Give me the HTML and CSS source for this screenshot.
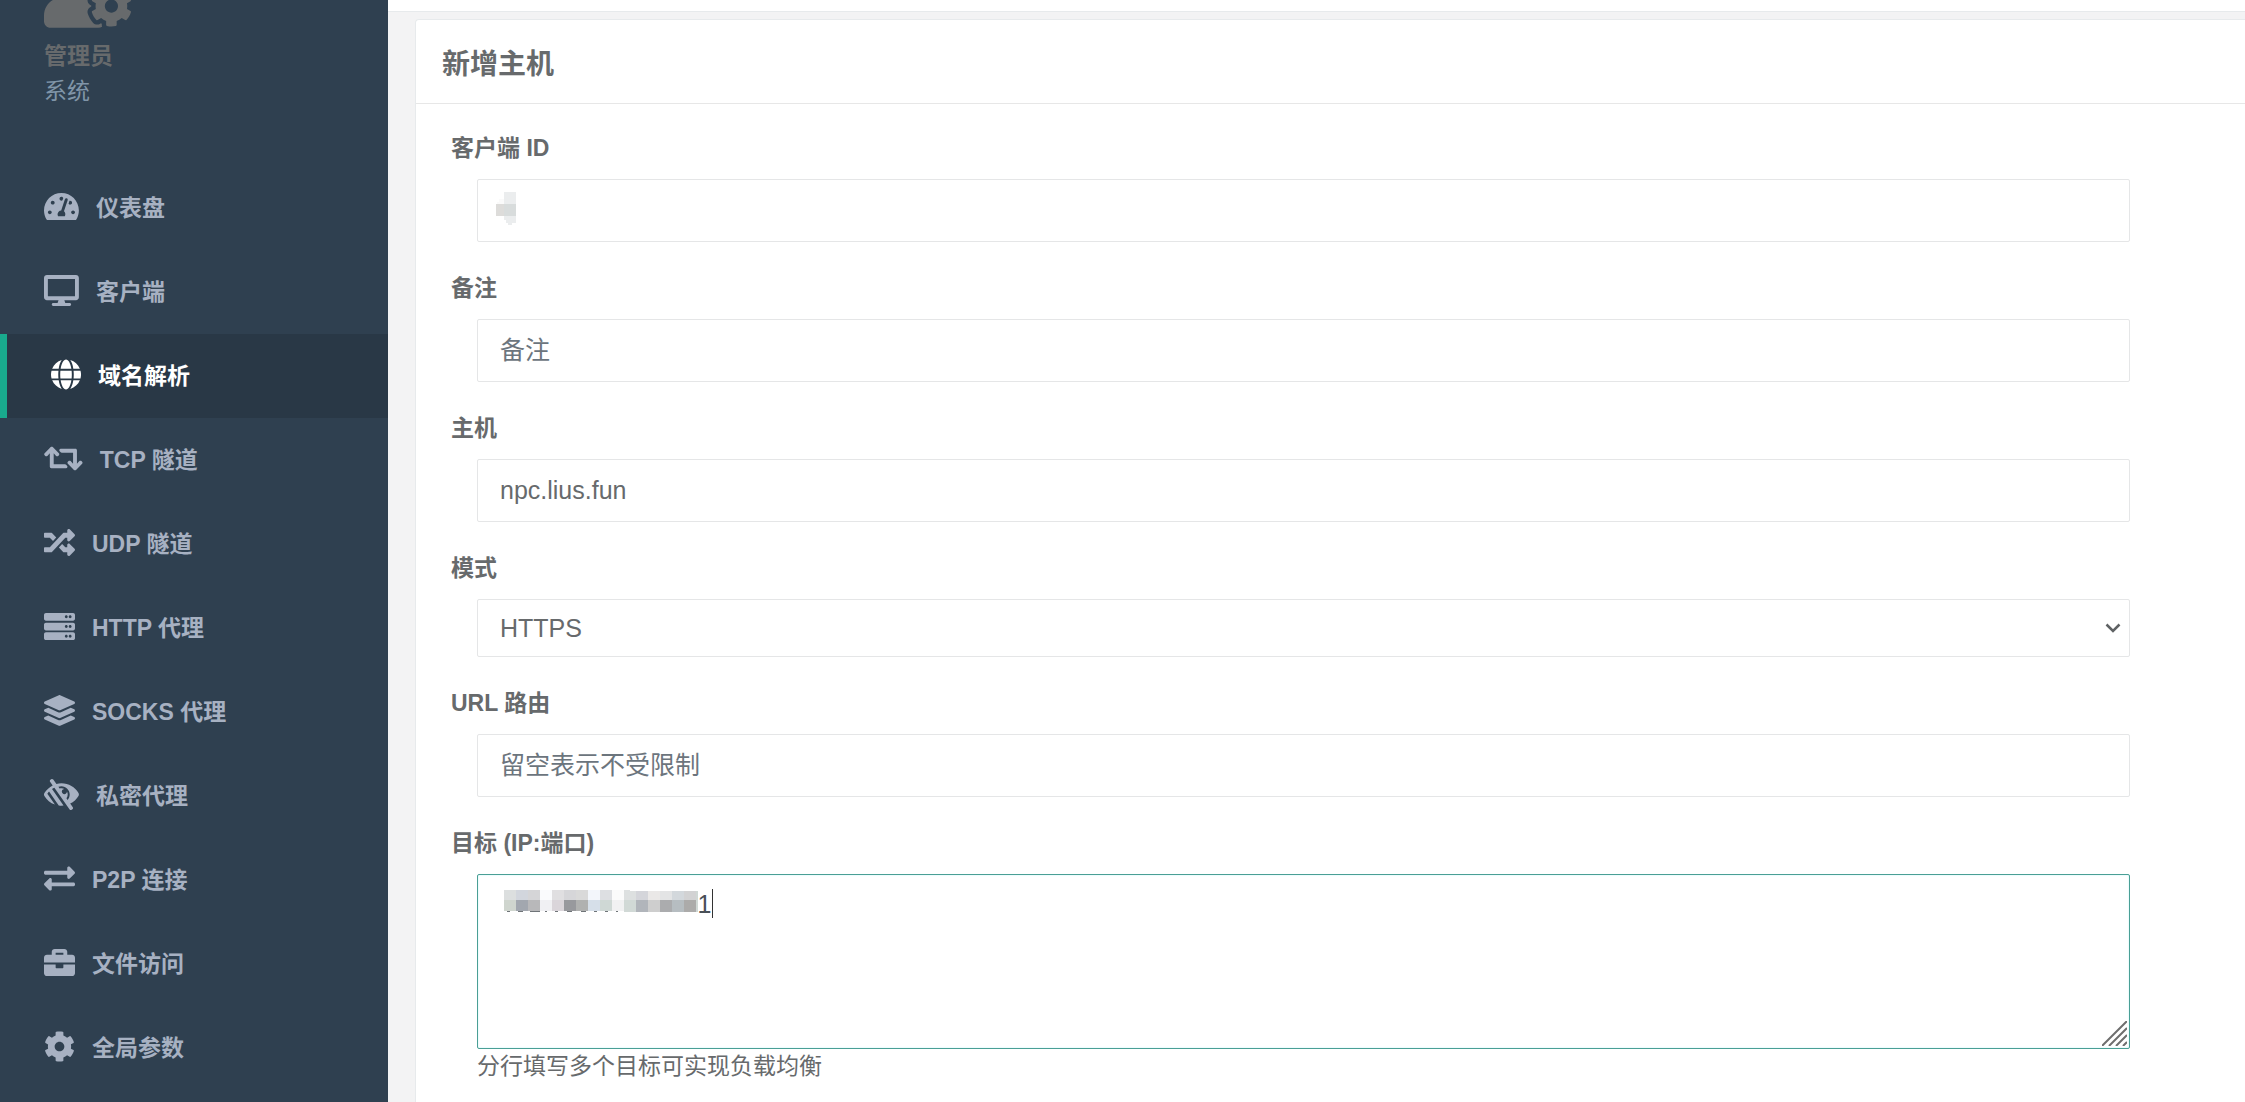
FILE: index.html
```html
<!DOCTYPE html>
<html lang="zh-CN">
<head>
<meta charset="utf-8">
<meta name="viewport" content="width=device-width, initial-scale=1">
<title>新增主机</title>
<link rel="stylesheet" href="styles.css">
</head>
<body>
<div class="layout">
  <aside class="sidebar">
    <div class="profile">
      <svg class="avatar" viewBox="0 0 640 512" aria-hidden="true"><path d="M610.5 373.3c2.6-14.1 2.6-28.5 0-42.6l25.8-14.9c3-1.7 4.3-5.2 3.3-8.5-6.7-21.6-18.2-41.2-33.2-57.4-2.3-2.5-6-3.1-9-1.4l-25.8 14.9c-10.9-9.3-23.4-16.5-36.9-21.3v-29.8c0-3.4-2.4-6.4-5.7-7.1-22.3-5-45-4.8-66.2 0-3.3.7-5.7 3.7-5.7 7.1v29.8c-13.5 4.8-26 12-36.9 21.3l-25.8-14.9c-2.9-1.7-6.7-1.1-9 1.4-15 16.2-26.5 35.8-33.2 57.4-1 3.3.4 6.8 3.3 8.5l25.8 14.9c-2.6 14.1-2.6 28.5 0 42.6l-25.8 14.9c-3 1.7-4.3 5.2-3.3 8.5 6.7 21.6 18.2 41.1 33.2 57.4 2.3 2.5 6 3.1 9 1.4l25.8-14.9c10.9 9.3 23.4 16.5 36.9 21.3v29.8c0 3.4 2.4 6.4 5.7 7.1 22.3 5 45 4.8 66.2 0 3.3-.7 5.7-3.7 5.7-7.1v-29.8c13.5-4.8 26-12 36.9-21.3l25.8 14.9c2.9 1.7 6.7 1.1 9-1.4 15-16.2 26.5-35.8 33.2-57.4 1-3.3-.4-6.8-3.3-8.5l-25.8-14.9zM496 400.5c-26.8 0-48.5-21.8-48.5-48.5s21.8-48.5 48.5-48.5 48.5 21.8 48.5 48.5-21.7 48.5-48.5 48.5zM224 256c70.7 0 128-57.3 128-128S294.7 0 224 0 96 57.3 96 128s57.3 128 128 128zm201.2 226.5c-2.3-1.2-4.6-2.6-6.8-3.9l-7.9 4.6c-6 3.4-12.8 5.3-19.6 5.3-10.9 0-21.4-4.6-28.9-12.6-18.3-19.8-32.3-43.9-40.2-69.6-5.5-17.7 1.9-36.4 17.9-45.7l7.9-4.6c-.1-2.6-.1-5.2 0-7.8l-7.9-4.6c-16-9.2-23.4-28-17.9-45.7.9-2.9 2.2-5.8 3.2-8.7-3.8-.3-7.5-1.2-11.4-1.2h-16.7c-22.2 10.2-46.9 16-72.9 16s-50.6-5.8-72.9-16h-16.7C60.2 288 0 348.2 0 422.4V464c0 26.5 21.5 48 48 48h352c10.1 0 19.5-3.2 27.2-8.5-1.2-3.8-2-7.7-2-11.8v-9.2z"/></svg>
      <strong class="profile-name">管理员</strong>
      <a class="profile-role" href="#">系统</a>
    </div>
    <nav>
      <ul class="menu">
        <li><a class="menu-link" href="#"><svg class="icon" viewBox="0 0 576 512" aria-hidden="true"><path d="M288 32C128.94 32 0 160.94 0 320c0 52.8 14.25 102.26 39.06 144.8 5.61 9.62 16.3 15.2 27.44 15.2h443c11.14 0 21.83-5.58 27.44-15.2C561.75 422.26 576 372.8 576 320c0-159.06-128.94-288-288-288zm0 64c14.71 0 26.58 10.13 30.32 23.65-1.11 2.26-2.64 4.23-3.45 6.67l-9.22 27.67c-5.13 3.49-10.97 6.01-17.64 6.01-17.67 0-32-14.33-32-32S270.33 96 288 96zM96 384c-17.67 0-32-14.33-32-32s14.33-32 32-32 32 14.33 32 32-14.33 32-32 32zm48-160c-17.67 0-32-14.33-32-32s14.33-32 32-32 32 14.33 32 32-14.33 32-32 32zm246.77-72.41l-61.33 184C343.13 347.33 352 364.54 352 384c0 11.72-3.38 22.55-8.88 32H232.88c-5.5-9.45-8.88-20.28-8.88-32 0-33.94 26.5-61.43 59.9-63.59l61.34-184.01c4.17-12.56 17.73-19.45 30.36-15.17 12.57 4.19 19.35 17.79 15.17 30.36zm14.66 57.2l15.52-46.55c3.47-1.29 7.13-2.23 11.05-2.23 17.67 0 32 14.33 32 32s-14.33 32-32 32c-11.38-.01-20.89-6.28-26.57-15.22zM480 384c-17.67 0-32-14.33-32-32s14.33-32 32-32 32 14.33 32 32-14.33 32-32 32z"/></svg><span>仪表盘</span></a></li>
        <li><a class="menu-link" href="#"><svg class="icon" viewBox="0 0 576 512" aria-hidden="true"><path d="M528 0H48C21.5 0 0 21.5 0 48v320c0 26.5 21.5 48 48 48h192l-16 48h-72c-13.3 0-24 10.7-24 24s10.7 24 24 24h272c13.3 0 24-10.7 24-24s-10.7-24-24-24h-72l-16-48h192c26.5 0 48-21.5 48-48V48c0-26.5-21.5-48-48-48zm-16 352H64V64h448v288z"/></svg><span>客户端</span></a></li>
        <li><a class="menu-link active" href="#" aria-current="page"><svg class="icon" viewBox="0 0 496 512" aria-hidden="true"><path d="M336.5 160C322 70.7 287.8 8 248 8s-74 62.7-88.5 152h177zM152 256c0 22.2 1.2 43.5 3.3 64h185.3c2.1-20.5 3.3-41.8 3.3-64s-1.2-43.5-3.3-64H155.3c-2.1 20.5-3.3 41.8-3.3 64zm324.7-96c-28.6-67.9-86.5-120.4-158-141.6 24.4 33.8 41.2 84.7 50 141.6h108zM177.2 18.4C105.8 39.6 47.8 92.1 19.3 160h108c8.7-56.9 25.5-107.8 49.9-141.6zM487.4 192H372.7c2.1 21 3.3 42.5 3.3 64s-1.2 43-3.3 64h114.6c5.5-20.5 8.6-41.8 8.6-64s-3.1-43.5-8.5-64zM120 256c0-21.5 1.2-43 3.3-64H8.6C3.2 212.5 0 233.8 0 256s3.2 43.5 8.6 64h114.6c-2-21-3.2-42.5-3.2-64zm39.5 96c14.5 89.3 48.7 152 88.5 152s74-62.7 88.5-152h-177zm159.3 141.6c71.4-21.2 129.4-73.7 158-141.6h-108c-8.8 56.9-25.6 107.8-50 141.6zM19.3 352c28.6 67.9 86.5 120.4 158 141.6-24.4-33.8-41.2-84.7-50-141.6h-108z"/></svg><span>域名解析</span></a></li>
        <li><a class="menu-link" href="#"><svg class="icon" viewBox="0 0 640 512" aria-hidden="true"><path d="M629.657 343.598L528.971 444.284c-9.373 9.372-24.568 9.372-33.941 0L394.343 343.598c-9.373-9.373-9.373-24.569 0-33.941l10.823-10.823c9.562-9.562 25.133-9.34 34.419.492L480 342.118V160H292.451a24.005 24.005 0 0 1-16.971-7.029l-16-16C244.361 121.851 255.069 96 276.451 96H520c13.255 0 24 10.745 24 24v222.118l40.416-42.792c9.285-9.831 24.856-10.054 34.419-.492l10.823 10.823c9.372 9.372 9.372 24.569-.001 33.941zm-265.138 15.431A23.999 23.999 0 0 0 347.548 352H160V169.881l40.416 42.792c9.286 9.831 24.856 10.054 34.419.491l10.822-10.822c9.373-9.373 9.373-24.569 0-33.941L144.971 67.716c-9.373-9.373-24.569-9.373-33.941 0L10.343 168.402c-9.373 9.373-9.373 24.569 0 33.941l10.822 10.822c9.562 9.562 25.133 9.34 34.419-.491L96 169.881V392c0 13.255 10.745 24 24 24h243.549c21.382 0 32.09-25.851 16.971-40.971l-16.001-16z"/></svg><span>TCP 隧道</span></a></li>
        <li><a class="menu-link" href="#"><svg class="icon" viewBox="0 0 512 512" aria-hidden="true"><path d="M504.971 359.029c9.373 9.373 9.373 24.569 0 33.941l-80 79.984c-15.01 15.01-40.971 4.49-40.971-16.971V416h-58.785a12.004 12.004 0 0 1-8.773-3.812l-70.556-75.596 53.333-57.143L352 336h32v-39.981c0-21.438 25.943-31.998 40.971-16.971l80 79.981zM12 176h84l52.781 56.551 53.333-57.143-70.556-75.596A11.999 11.999 0 0 0 122.785 96H12c-6.627 0-12 5.373-12 12v56c0 6.627 5.373 12 12 12zm372 0v39.984c0 21.46 25.961 31.98 40.971 16.971l80-79.984c9.373-9.373 9.373-24.569 0-33.941l-80-79.981C409.943 24.021 384 34.582 384 56.019V96h-58.785a12.004 12.004 0 0 0-8.773 3.812L96 336H12c-6.627 0-12 5.373-12 12v56c0 6.627 5.373 12 12 12h110.785c3.326 0 6.503-1.381 8.773-3.812L352 176h32z"/></svg><span>UDP 隧道</span></a></li>
        <li><a class="menu-link" href="#"><svg class="icon" viewBox="0 0 512 512" aria-hidden="true"><path d="M480 160H32c-17.673 0-32-14.327-32-32V64c0-17.673 14.327-32 32-32h448c17.673 0 32 14.327 32 32v64c0 17.673-14.327 32-32 32zm-48-88c-13.255 0-24 10.745-24 24s10.745 24 24 24 24-10.745 24-24-10.745-24-24-24zm-64 0c-13.255 0-24 10.745-24 24s10.745 24 24 24 24-10.745 24-24-10.745-24-24-24zm112 248H32c-17.673 0-32-14.327-32-32v-64c0-17.673 14.327-32 32-32h448c17.673 0 32 14.327 32 32v64c0 17.673-14.327 32-32 32zm-48-88c-13.255 0-24 10.745-24 24s10.745 24 24 24 24-10.745 24-24-10.745-24-24-24zm-64 0c-13.255 0-24 10.745-24 24s10.745 24 24 24 24-10.745 24-24-10.745-24-24-24zm112 248H32c-17.673 0-32-14.327-32-32v-64c0-17.673 14.327-32 32-32h448c17.673 0 32 14.327 32 32v64c0 17.673-14.327 32-32 32zm-48-88c-13.255 0-24 10.745-24 24s10.745 24 24 24 24-10.745 24-24-10.745-24-24-24zm-64 0c-13.255 0-24 10.745-24 24s10.745 24 24 24 24-10.745 24-24-10.745-24-24-24z"/></svg><span>HTTP 代理</span></a></li>
        <li><a class="menu-link" href="#"><svg class="icon" viewBox="0 0 512 512" aria-hidden="true"><path d="M12.41 148.02l232.94 105.67c6.8 3.09 14.49 3.09 21.29 0l232.94-105.67c16.55-7.51 16.55-32.52 0-40.03L266.65 2.31a25.607 25.607 0 0 0-21.29 0L12.41 107.98c-16.55 7.51-16.55 32.53 0 40.04zm487.18 88.28l-58.09-26.33-161.64 73.27c-7.56 3.43-15.59 5.17-23.86 5.17s-16.29-1.74-23.86-5.17L70.51 209.97l-58.1 26.33c-16.55 7.5-16.55 32.5 0 40l232.94 105.59c6.8 3.08 14.49 3.08 21.29 0L499.59 276.3c16.55-7.5 16.55-32.5 0-40zm0 127.8l-57.87-26.23-161.86 73.37c-7.56 3.43-15.59 5.17-23.86 5.17s-16.29-1.74-23.86-5.17L70.29 337.87 12.41 364.1c-16.55 7.5-16.55 32.5 0 40l232.94 105.59c6.8 3.08 14.49 3.08 21.29 0L499.59 404.1c16.55-7.5 16.55-32.5 0-40z"/></svg><span>SOCKS 代理</span></a></li>
        <li><a class="menu-link" href="#"><svg class="icon" viewBox="0 0 576 512" aria-hidden="true"><path d="M569.344 231.631C512.96 135.949 407.81 72 288 72c-28.468 0-56.102 3.619-82.451 10.415L152.778 10.24c-7.601-10.858-22.564-13.5-33.423-5.9l-13.114 9.178c-10.86 7.601-13.502 22.566-5.9 33.426l43.131 58.395C89.449 131.73 40.228 174.683 6.682 231.581c-.01.017-.023.033-.034.05-8.765 14.875-8.964 33.528 0 48.739 38.5 65.332 99.742 115.862 172.859 141.349L55.316 244.302A272.194 272.194 0 0 1 83.61 208.39l119.4 170.58h.01l40.63 58.04a330.055 330.055 0 0 0 78.94 1.17l-189.98-271.4a277.628 277.628 0 0 1 38.777-21.563l251.836 356.544c7.601 10.858 22.564 13.499 33.423 5.9l13.114-9.178c10.86-7.601 13.502-22.567 5.9-33.426l-43.12-58.377-.007-.009c57.161-27.978 104.835-72.04 136.81-126.301a47.938 47.938 0 0 0 .001-48.739zM390.026 345.94l-19.066-27.23c24.682-32.567 27.711-76.353 8.8-111.68v.03c0 23.65-19.17 42.82-42.82 42.82-23.828 0-42.82-19.349-42.82-42.82 0-23.65 19.17-42.82 42.82-42.82h.03c-24.75-13.249-53.522-15.643-79.51-7.68l-19.068-27.237C253.758 123.306 270.488 120 288 120c75.162 0 136 60.826 136 136 0 34.504-12.833 65.975-33.974 89.94z"/></svg><span>私密代理</span></a></li>
        <li><a class="menu-link" href="#"><svg class="icon" viewBox="0 0 512 512" aria-hidden="true"><path d="M0 168v-16c0-13.255 10.745-24 24-24h360V80c0-21.367 25.899-32.042 40.971-16.971l80 80c9.372 9.373 9.372 24.569 0 33.941l-80 80C409.956 271.982 384 261.456 384 240v-48H24c-13.255 0-24-10.745-24-24zm488 152H128v-48c0-21.314-25.862-32.08-40.971-16.971l-80 80c-9.372 9.373-9.372 24.569 0 33.941l80 80C102.057 463.997 128 453.437 128 432v-48h360c13.255 0 24-10.745 24-24v-16c0-13.255-10.745-24-24-24z"/></svg><span>P2P 连接</span></a></li>
        <li><a class="menu-link" href="#"><svg class="icon" viewBox="0 0 512 512" aria-hidden="true"><path d="M320 336c0 8.84-7.16 16-16 16h-96c-8.84 0-16-7.16-16-16v-48H0v144c0 25.6 22.4 48 48 48h416c25.6 0 48-22.4 48-48V288H320v48zm144-208h-80V80c0-25.6-22.4-48-48-48H176c-25.6 0-48 22.4-48 48v48H48c-25.6 0-48 22.4-48 48v80h512v-80c0-25.6-22.4-48-48-48zm-144 0H192V96h128v32z"/></svg><span>文件访问</span></a></li>
        <li><a class="menu-link" href="#"><svg class="icon" viewBox="0 0 512 512" aria-hidden="true"><path d="M487.4 315.7l-42.6-24.6c4.3-23.2 4.3-47 0-70.2l42.6-24.6c4.9-2.8 7.1-8.6 5.5-14-11.1-35.6-30-67.8-54.7-94.6-3.8-4.1-10-5.1-14.8-2.3L380.8 110c-17.9-15.4-38.5-27.3-60.8-35.1V25.8c0-5.6-3.9-10.5-9.4-11.7-36.7-8.2-74.3-7.8-109.2 0-5.5 1.2-9.4 6.1-9.4 11.7V75c-22.2 7.9-42.8 19.8-60.8 35.1L88.7 85.5c-4.9-2.8-11-1.9-14.8 2.3-24.7 26.7-43.6 58.9-54.7 94.6-1.7 5.4.6 11.2 5.5 14L67.3 221c-4.3 23.2-4.3 47 0 70.2l-42.6 24.6c-4.9 2.8-7.1 8.6-5.5 14 11.1 35.6 30 67.8 54.7 94.6 3.8 4.1 10 5.1 14.8 2.3l42.6-24.6c17.9 15.4 38.5 27.3 60.8 35.1v49.2c0 5.6 3.9 10.5 9.4 11.7 36.7 8.2 74.3 7.8 109.2 0 5.5-1.2 9.4-6.1 9.4-11.7v-49.2c22.2-7.9 42.8-19.8 60.8-35.1l42.6 24.6c4.9 2.8 11 1.9 14.8-2.3 24.7-26.7 43.6-58.9 54.7-94.6 1.5-5.5-.7-11.3-5.6-14.1zM256 336c-44.1 0-80-35.9-80-80s35.9-80 80-80 80 35.9 80 80-35.9 80-80 80z"/></svg><span>全局参数</span></a></li>
      </ul>
    </nav>
  </aside>

  <div class="page">
    <header class="topbar"></header>
    <main class="content">
      <section class="card">
        <h1 class="card-title">新增主机</h1>
        <form class="form">
          <div class="field">
            <label for="client">客户端 ID</label>
            <div class="control">
              <input class="input" id="client" type="text">
              <svg class="mask mask-client" width="20" height="33" viewBox="0 0 20 33" shape-rendering="crispEdges" aria-hidden="true">
                <path fill="#fafafa" d="M3 7h5v5H1v-2h2z"/>
                <path fill="#ebedee" d="M8 0h12v31h-4v2h-4v-2h-2v-3H8z"/>
                <path fill="#dddcda" d="M0 12h8v12H0z"/>
                <path fill="#d8dcdc" d="M8 12h12v12H8z"/>
              </svg>
            </div>
          </div>
          <div class="field">
            <label for="remark">备注</label>
            <div class="control"><input class="input" id="remark" type="text" placeholder="备注"></div>
          </div>
          <div class="field">
            <label for="host">主机</label>
            <div class="control"><input class="input" id="host" type="text" value="npc.lius.fun"></div>
          </div>
          <div class="field">
            <label for="scheme">模式</label>
            <div class="control">
              <select class="input select" id="scheme"><option>HTTPS</option></select>
              <svg class="chevron" width="16" height="10" viewBox="0 0 16 10" aria-hidden="true"><path d="M1.500 1.500 8 8l6.500-6.500" fill="none" stroke="#5f6264" stroke-width="2.500"/></svg>
            </div>
          </div>
          <div class="field">
            <label for="location">URL 路由</label>
            <div class="control"><input class="input" id="location" type="text" placeholder="留空表示不受限制"></div>
          </div>
          <div class="field">
            <label for="target">目标 (IP:端口)</label>
            <div class="control">
              <textarea class="input textarea" id="target">&nbsp;&nbsp;&nbsp;&nbsp;&nbsp;&nbsp;&nbsp;&nbsp;&nbsp;&nbsp;&nbsp;&nbsp;&nbsp;&nbsp;&nbsp;&nbsp;&nbsp;&nbsp;&nbsp;&nbsp;&nbsp;&nbsp;&nbsp;&nbsp;&nbsp;&nbsp;&nbsp;&nbsp;1</textarea>
              <svg class="mask mask-target" width="194" height="22" viewBox="0 0 194 22" shape-rendering="crispEdges" aria-hidden="true">
                <path fill="#dcdfdf" d="M0 0h12v10H0z"/><path fill="#d2d6dd" d="M12 0h12v10H12z"/><path fill="#d5d5d7" d="M24 0h12v10H24z"/><path fill="#fafbfd" d="M36 0h12v10H36z"/><path fill="#e0dfe1" d="M48 0h12v10H48z"/><path fill="#d6d6d9" d="M60 0h12v10H60z"/><path fill="#d9d9d9" d="M72 0h12v10H72z"/><path fill="#f3f6fb" d="M84 0h12v10H84z"/><path fill="#dddfe2" d="M96 0h12v10H96z"/><path fill="#fbfbfb" d="M108 0h12v10h-12z"/><path fill="#dde0e0" d="M120 0h6v1h6v9h-12z"/><path fill="#d4d5da" d="M132 1h12v9h-12z"/><path fill="#eae8e7" d="M144 1h12v9h-12z"/><path fill="#e3e4e5" d="M156 1h12v9h-12z"/><path fill="#d3d8dc" d="M168 1h12v9h-12z"/><path fill="#d2d2d3" d="M180 1h12v9h-12z"/>
                <path fill="#cfd5ce" d="M0 10h12v11H0z"/><path fill="#a2a7af" d="M12 10h12v11H12z"/><path fill="#b8b8ba" d="M24 10h12v11H24z"/><path fill="#f0f0f3" d="M36 10h12v11H36z"/><path fill="#dad5da" d="M48 10h12v11H48z"/><path fill="#98999d" d="M60 10h12v11H60z"/><path fill="#b0b1b0" d="M72 10h12v11H72z"/><path fill="#d6dfe9" d="M84 10h12v11H84z"/><path fill="#cfd8d5" d="M96 10h12v11H96z"/><path fill="#f1f1f2" d="M108 10h12v11h-12z"/><path fill="#d1d9d6" d="M120 10h12v12h-12z"/><path fill="#b1b5bb" d="M132 10h12v12h-12z"/><path fill="#cecece" d="M144 10h12v12h-12z"/><path fill="#abacae" d="M156 10h12v12h-12z"/><path fill="#b6bdc1" d="M168 10h12v12h-12z"/><path fill="#acabaa" d="M180 10h12v12h-12z"/><path fill="#d0d8d5" d="M192 1h2v21h-2z"/>
                <path fill="#6f7478" d="M3 21h3v1H3zM14 21h5v1h-5zM26 21h10v1H26zM41 21h2v1h-2zM51 21h3v1h-3zM63 21h5v1h-5zM77 21h5v1h-5zM90 21h3v1h-3zM101 21h3v1h-3zM112 21h2v1h-2z"/>
              </svg>
              <span class="caret"></span>
              <svg class="grip" width="25" height="25" viewBox="0 0 25 25" aria-hidden="true"><path d="M0 25 25 0M7 25 25 7M14 25l11-11M21 25l4-4" fill="none" stroke="#6e6e6e" stroke-width="2"/></svg>
            </div>
            <p class="help">分行填写多个目标可实现负载均衡</p>
          </div>
        </form>
      </section>
    </main>
  </div>
</div>
</body>
</html>
```

FILE: styles.css
```css
* {
  box-sizing: border-box;
}

body {
  margin: 0;
  background: #f3f3f4;
  color: #676a6c;
  font: 23px/34px "Liberation Sans", "Noto Sans CJK SC", sans-serif;
}

.layout {
  display: flex;
  min-height: 100vh;
}

/* Sidebar */
.sidebar {
  flex: 0 0 388px;
  background: #2f4050;
}

/* The profile block is scrolled partly out of view */
.profile {
  display: flex;
  flex-direction: column;
  margin-top: -42px;
  padding: 0 44px 57px;
}

.avatar {
  width: 87px;
  height: 70px;
  margin-bottom: 11px;
  fill: #676a6c;
}

.profile-name,
.profile-role {
  line-height: 35px;
}

.profile-role {
  color: #8095a8;
  text-decoration: none;
}

.menu {
  margin: 0;
  padding: 0;
  list-style: none;
}

.menu-link {
  display: flex;
  align-items: center;
  gap: 17px;
  height: 84px;
  padding: 0 44px;
  color: #a7b1c2;
  font-weight: bold;
  text-decoration: none;
}

.menu-link.active {
  border-left: 7px solid #19aa8d;
  background: #293846;
  color: #fff;
}

.icon {
  height: 31px;
  margin-bottom: 3px;
  fill: currentColor;
}

/* Page */
.page {
  display: flex;
  flex: 1;
  flex-direction: column;
  min-width: 0;
}

.topbar {
  height: 12px;
  border-bottom: 1px solid #e7eaec;
  background: #fff;
}

.content {
  display: flex;
  flex: 1;
  padding: 7px 0 0 27px;
}

.card {
  flex: 1;
  min-width: 0;
  border: 1px solid #e7eaec;
  border-width: 1px 0 0 1px;
  border-radius: 4px 0 0 0;
  background: #fff;
}

.card-title {
  margin: 0;
  padding: 28px 26px 21px;
  border-bottom: 1px solid #e7e7e7;
  font-size: 28px;
  line-height: 34px;
}

.form {
  display: flex;
  flex-direction: column;
  gap: 29px;
  padding: 27px 115px 20px 35px;
}

.field label {
  display: block;
  margin-bottom: 14px;
  font-weight: bold;
}

.control {
  position: relative;
  margin-left: 26px;
}

.input {
  display: block;
  width: 100%;
  height: 63px;
  margin: 0;
  padding: 0 22px;
  border: 1px solid #e5e6e7;
  border-radius: 2px;
  outline: 0;
  background: #fff;
  color: #676a6c;
  font: 25px/34px "Liberation Sans", "Noto Sans CJK SC", sans-serif;
}

.input::placeholder {
  color: #6c757d;
  opacity: 1;
}

.select {
  height: 58px;
  appearance: none;
}

.textarea {
  height: 175px;
  padding: 12px 25px;
  border-color: #4a9f95;
  box-shadow: inset 0 0 2px #bff3f5;
  color: #495057;
  resize: none;
}

.chevron {
  position: absolute;
  top: 24px;
  right: 9px;
}

.mask {
  position: absolute;
}

.mask-client {
  top: 13px;
  left: 19px;
}

.mask-target {
  top: 16px;
  left: 27px;
}

.caret {
  position: absolute;
  top: 15px;
  left: 235px;
  width: 1px;
  height: 29px;
  background: #333;
}

.grip {
  position: absolute;
  right: 3px;
  bottom: 3px;
}

.help {
  margin: 0;
  padding-left: 26px;
}
```
